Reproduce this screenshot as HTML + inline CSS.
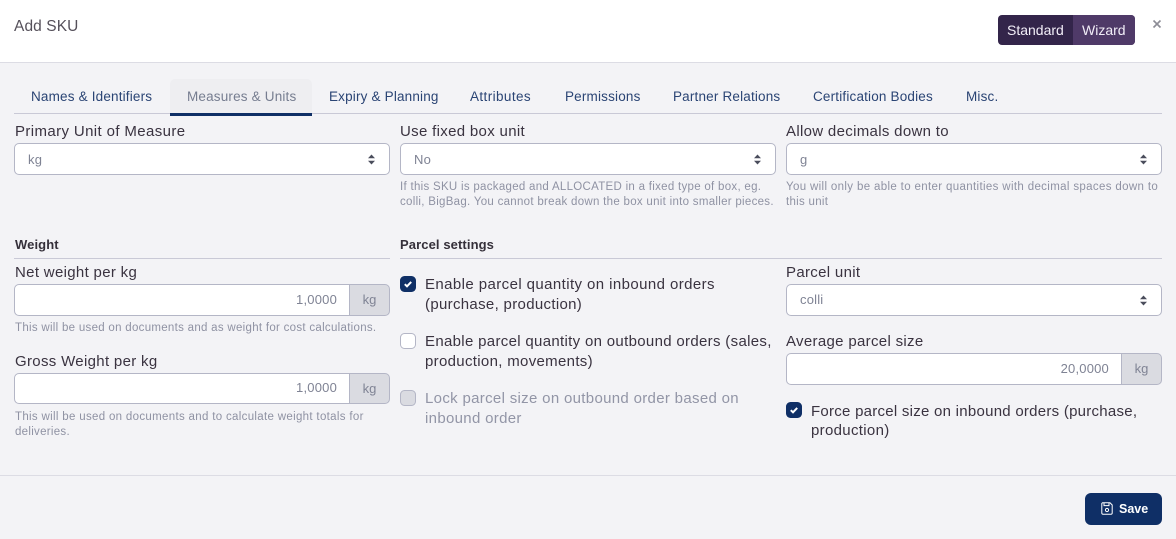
<!DOCTYPE html>
<html><head><meta charset="utf-8"><style>
html,body{margin:0;padding:0}
body{width:1176px;height:539px;position:relative;overflow:hidden;background:#f3f3f6;font-family:"Liberation Sans",sans-serif;color:#3a3340}
.t{position:absolute;white-space:nowrap;line-height:20px;height:20px}
.l{font-size:15px;letter-spacing:.32px;color:#3a3340;margin-top:2px}
.tab{font-size:13.5px;letter-spacing:.18px;color:#2a4474;margin-top:1px}
.h{font-size:13px;letter-spacing:.1px;font-weight:bold;color:#35303a;margin-top:1px}
.s{font-size:11.5px;letter-spacing:.29px;color:#8f92a3;line-height:14px;height:14px;margin-top:1px}
.b{position:absolute;box-sizing:border-box;background:#fff;border:1px solid #b4b6c6;border-radius:5px;height:32px}
.v{font-size:13px;letter-spacing:.2px;color:#7f8394}
.r{position:absolute;background:#c9c9d6;height:1px}
.add{position:absolute;box-sizing:border-box;background:#dadbe1;border:1px solid #b4b6c6;border-radius:0 5px 5px 0;width:41px;height:32px;text-align:center;line-height:29px;font-size:13px;color:#7f8394}
.c{position:absolute;box-sizing:border-box;width:16px;height:16px;border-radius:4.5px}
.on{background:#0f2f66}
.car{position:absolute}
</style></head><body>
<div style="position:absolute;left:0;top:0;width:1176px;height:62px;background:#fff;border-bottom:1px solid #dcdce4"></div>
<div class="t" style="left:14px;top:17px;font-size:15.5px;letter-spacing:.1px;color:#55505a">Add SKU</div>
<div style="position:absolute;left:998px;top:15px;width:137px;height:30px;border-radius:4px;background:#33254a;overflow:hidden"><div style="position:absolute;left:75px;top:0;width:62px;height:30px;background:#4f3a68"></div></div>
<div class="t" style="left:1007px;top:20px;font-size:14px;color:#f2eef8">Standard</div>
<div class="t" style="left:1082px;top:20px;font-size:14px;color:#f2eef8">Wizard</div>
<svg style="position:absolute;left:1152px;top:19px" width="10" height="10" viewBox="0 0 10 10"><path d="M1.5 1.5L8.5 8.5M8.5 1.5L1.5 8.5" stroke="#8d8d96" stroke-width="1.6"/></svg>

<div class="r" style="left:14px;top:113px;width:1148px"></div>
<div style="position:absolute;left:170px;top:79px;width:142px;height:34px;background:#eeeef1;border-radius:5px 5px 0 0"></div>
<div style="position:absolute;left:170px;top:113px;width:142px;height:3px;background:#0f2f66"></div>
<div class="t tab" style="left:31px;top:86px">Names &amp; Identifiers</div>
<div class="t tab" style="left:187px;top:86px;color:#767d90">Measures &amp; Units</div>
<div class="t tab" style="left:329px;top:86px">Expiry &amp; Planning</div>
<div class="t tab" style="left:470px;top:86px;letter-spacing:.4px">Attributes</div>
<div class="t tab" style="left:565px;top:86px">Permissions</div>
<div class="t tab" style="left:673px;top:86px">Partner Relations</div>
<div class="t tab" style="left:813px;top:86px">Certification Bodies</div>
<div class="t tab" style="left:966px;top:86px">Misc.</div>

<div class="t l" style="left:15px;top:120px;letter-spacing:.38px">Primary Unit of Measure</div>
<div class="t l" style="left:400px;top:120px">Use fixed box unit</div>
<div class="t l" style="left:786px;top:120px">Allow decimals down to</div>

<div class="b" style="left:14px;top:143px;width:376px"></div>
<div class="b" style="left:400px;top:143px;width:376px"></div>
<div class="b" style="left:786px;top:143px;width:376px"></div>
<div class="t v" style="left:28px;top:150px">kg</div>
<div class="t v" style="left:414px;top:150px">No</div>
<div class="t v" style="left:800px;top:150px">g</div>
<svg class="car" style="left:367px;top:154px" width="9" height="11" viewBox="0 0 9 11"><path d="M4.5 0.5L8 4.2H1zM4.5 10.5L8 6.8H1z" fill="#4a4d5c"/></svg>
<svg class="car" style="left:753px;top:154px" width="9" height="11" viewBox="0 0 9 11"><path d="M4.5 0.5L8 4.2H1zM4.5 10.5L8 6.8H1z" fill="#4a4d5c"/></svg>
<svg class="car" style="left:1139px;top:154px" width="9" height="11" viewBox="0 0 9 11"><path d="M4.5 0.5L8 4.2H1zM4.5 10.5L8 6.8H1z" fill="#4a4d5c"/></svg>

<div class="t s" style="left:400px;top:179px">If this SKU is packaged and ALLOCATED in a fixed type of box, eg.</div>
<div class="t s" style="left:400px;top:194px">colli, BigBag. You cannot break down the box unit into smaller pieces.</div>
<div class="t s" style="left:786px;top:179px;letter-spacing:.35px">You will only be able to enter quantities with decimal spaces down to</div>
<div class="t s" style="left:786px;top:194px">this unit</div>

<div class="t h" style="left:15px;top:234px">Weight</div>
<div class="t h" style="left:400px;top:234px">Parcel settings</div>
<div class="r" style="left:14px;top:258px;width:376px"></div>
<div class="r" style="left:400px;top:258px;width:762px"></div>

<div class="t l" style="left:15px;top:261px">Net weight per kg</div>
<div class="b" style="left:14px;top:284px;width:336px;border-radius:5px 0 0 5px"></div>
<div class="add" style="left:349px;top:284px">kg</div>
<div class="t v" style="right:839px;top:290px">1,0000</div>
<div class="t s" style="left:15px;top:320px">This will be used on documents and as weight for cost calculations.</div>

<div class="t l" style="left:15px;top:350px">Gross Weight per kg</div>
<div class="b" style="left:14px;top:373px;width:336px;height:31px;border-radius:5px 0 0 5px"></div>
<div class="add" style="left:349px;top:373px;height:31px">kg</div>
<div class="t v" style="right:839px;top:378px">1,0000</div>
<div class="t s" style="left:15px;top:409px;letter-spacing:.32px">This will be used on documents and to calculate weight totals for</div>
<div class="t s" style="left:15px;top:424px">deliveries.</div>

<div class="c on" style="left:400px;top:276px"><svg width="16" height="16" viewBox="0 0 16 16" style="display:block"><path d="M4.8 8.2L7 10.3L11.2 5.9" fill="none" stroke="#fff" stroke-width="2"/></svg></div>
<div class="t l" style="left:425px;top:273px;letter-spacing:.41px">Enable parcel quantity on inbound orders</div>
<div class="t l" style="left:425px;top:293px">(purchase, production)</div>
<div class="c" style="left:400px;top:333px;background:#fff;border:1px solid #b4b6c6"></div>
<div class="t l" style="left:425px;top:330px">Enable parcel quantity on outbound orders (sales,</div>
<div class="t l" style="left:425px;top:350px">production, movements)</div>
<div class="c" style="left:400px;top:390px;background:#dadbe1;border:1px solid #b4b6c6"></div>
<div class="t l" style="left:425px;top:387px;color:#9295a6">Lock parcel size on outbound order based on</div>
<div class="t l" style="left:425px;top:407px;color:#9295a6">inbound order</div>

<div class="t l" style="left:786px;top:261px">Parcel unit</div>
<div class="b" style="left:786px;top:284px;width:376px"></div>
<div class="t v" style="left:800px;top:290px">colli</div>
<svg class="car" style="left:1139px;top:295px" width="9" height="11" viewBox="0 0 9 11"><path d="M4.5 0.5L8 4.2H1zM4.5 10.5L8 6.8H1z" fill="#4a4d5c"/></svg>
<div class="t l" style="left:786px;top:330px">Average parcel size</div>
<div class="b" style="left:786px;top:353px;width:337px;border-radius:5px 0 0 5px"></div>
<div class="add" style="left:1121px;top:353px">kg</div>
<div class="t v" style="right:67px;top:359px">20,0000</div>
<div class="c on" style="left:786px;top:402px"><svg width="16" height="16" viewBox="0 0 16 16" style="display:block"><path d="M4.8 8.2L7 10.3L11.2 5.9" fill="none" stroke="#fff" stroke-width="2"/></svg></div>
<div class="t l" style="left:811px;top:400px;letter-spacing:.26px">Force parcel size on inbound orders (purchase,</div>
<div class="t l" style="left:811px;top:419px">production)</div>

<div class="r" style="left:0;top:475px;width:1176px;background:#dcdce4"></div>
<div style="position:absolute;left:1085px;top:493px;width:77px;height:32px;background:#0f2f66;border-radius:6px"></div>
<svg style="position:absolute;left:1101px;top:502px" width="12" height="13" viewBox="0 0 12 13"><path d="M1.5.8H9L11.2 3V11a1.2 1.2 0 0 1-1.2 1.2H2A1.2 1.2 0 0 1 .8 11V1.5ZM3 .8V3.6H8V.8" fill="none" stroke="#fff" stroke-width="1"/><circle cx="6" cy="8" r="1.6" fill="none" stroke="#fff"/></svg>
<div class="t" style="left:1119px;top:499px;font-size:12.5px;font-weight:bold;color:#fff">Save</div>
</body></html>
